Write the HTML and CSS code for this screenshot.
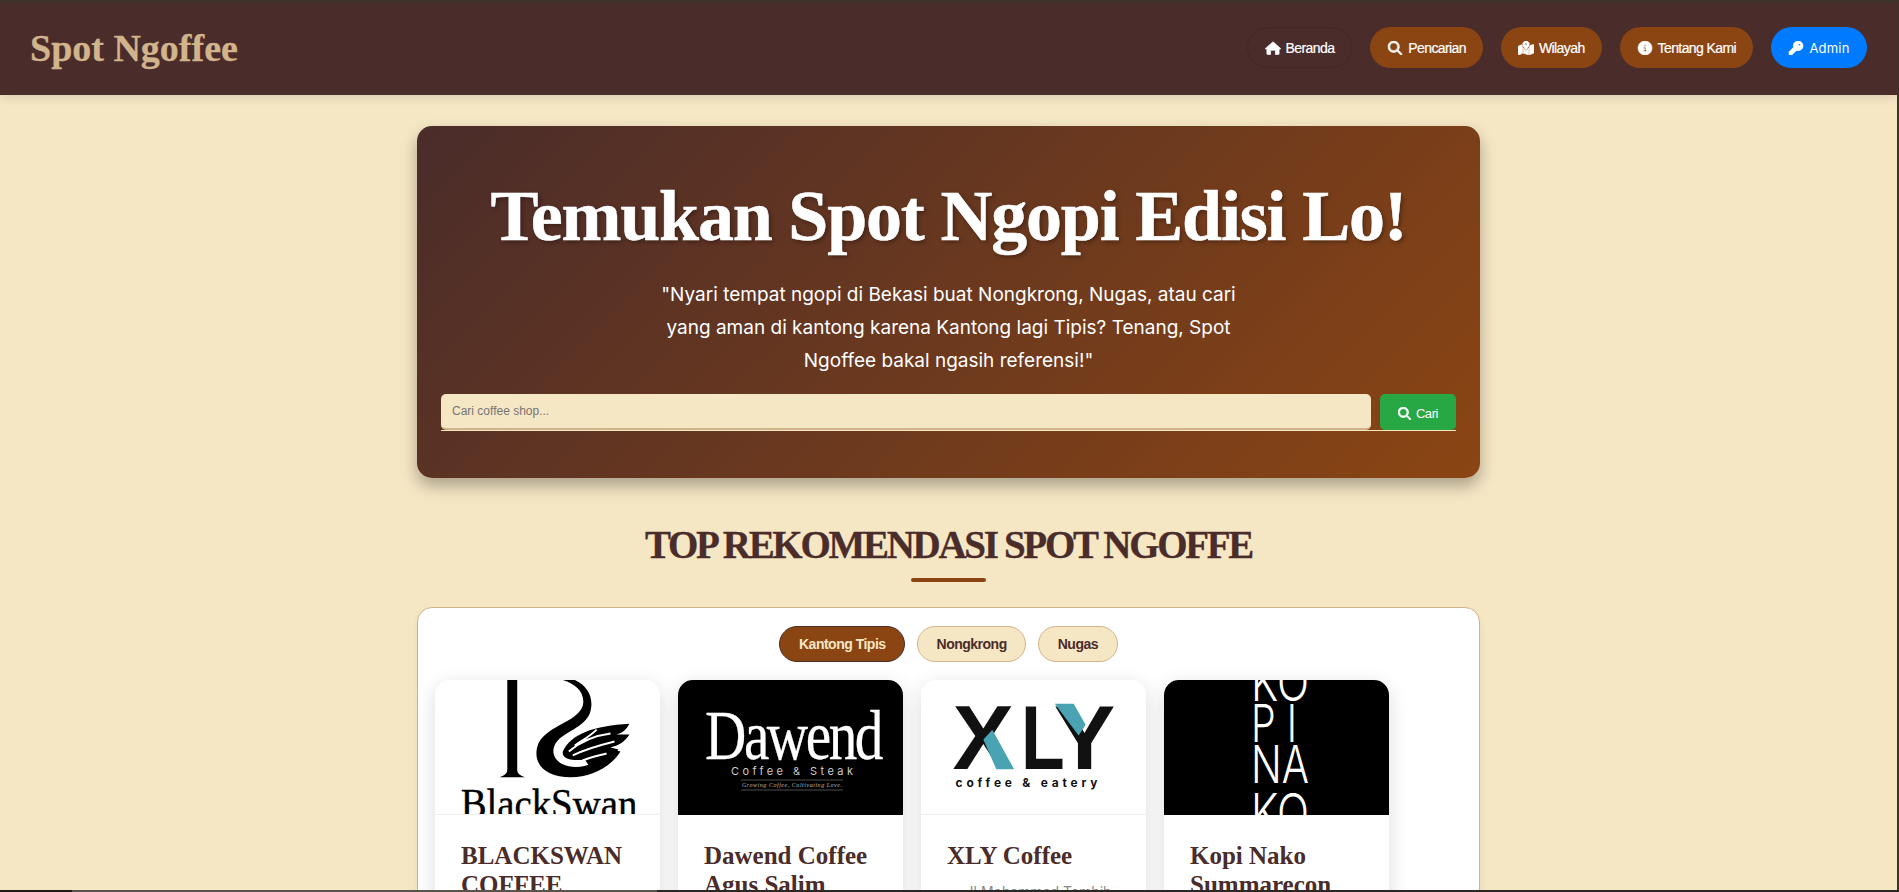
FILE: index.html
```html
<!DOCTYPE html>
<html lang="id">
<head>
<meta charset="utf-8">
<title>Spot Ngoffee</title>
<link rel="stylesheet" href="styles.css">
</head>
<body>
<div class="app">
  <nav class="navbar">
    <a class="brand">Spot Ngoffee</a>
    <ul class="nav-links">
      <li class="nav-item nav-home">
        <svg class="icon" viewBox="0 0 576 512"><path d="M288 28 L566 272 C576 282 570 296 556 296 H512 V470 C512 486 500 496 486 496 H376 V340 H200 V496 H90 C76 496 64 486 64 470 V296 H20 C6 296 0 282 10 272 Z"/></svg>
        Beranda</li>
      <li class="nav-item">
        <svg class="icon" viewBox="0 0 512 512"><path d="M416 208c0 45.900-14.900 88.300-40 122.700L502.600 457.400c12.500 12.500 12.500 32.800 0 45.300s-32.800 12.500-45.300 0L330.700 376c-34.400 25.200-76.800 40-122.700 40C93.100 416 0 322.900 0 208S93.100 0 208 0S416 93.100 416 208zM208 352a144 144 0 1 0 0-288 144 144 0 1 0 0 288z"/></svg>
        Pencarian</li>
      <li class="nav-item">
        <svg class="icon" viewBox="0 0 576 512"><path d="M408 120c0 54.600-73.100 151.900-105.200 192c-7.700 9.600-22 9.600-29.600 0C241.100 271.900 168 174.600 168 120C168 53.700 221.700 0 288 0s120 53.700 120 120zm8 80.400c3.500-6.900 6.700-13.800 9.600-20.600c.5-1.200 1-2.500 1.500-3.700l116-46.400C558.900 123.400 576 135 576 152V422.800c0 9.800-6 18.600-15.100 22.300L416 503V200.400zM137.600 138.300c2.400 14.100 7.200 28.300 12.800 41.500c2.900 6.800 6.100 13.700 9.600 20.600V451.800L32.900 502.700C17.100 509 0 497.400 0 480.400V209.600c0-9.800 6-18.600 15.100-22.300l122.600-49zM327.800 332c13.900-17.400 35.700-45.700 56.200-77V504.300L192 449.400V255c20.500 31.300 42.300 59.600 56.200 77c20.500 25.600 59.100 25.600 79.600 0zM288 152a40 40 0 1 0 0-80 40 40 0 1 0 0 80z"/></svg>
        Wilayah</li>
      <li class="nav-item">
        <svg class="icon" viewBox="0 0 512 512"><path fill-rule="evenodd" d="M256 0a256 256 0 1 0 0 512 256 256 0 1 0 0-512zM216 336h24V272H216c-13.300 0-24-10.700-24-24s10.700-24 24-24h48c13.300 0 24 10.700 24 24v88h8c13.300 0 24 10.700 24 24s-10.700 24-24 24H216c-13.300 0-24-10.700-24-24s10.700-24 24-24zm40-208a32 32 0 1 1 0 64 32 32 0 1 1 0-64z"/></svg>
        Tentang Kami</li>
      <li class="nav-item nav-admin">
        <svg class="icon" viewBox="0 0 512 512"><path d="M336 352c97.200 0 176-78.800 176-176S433.200 0 336 0S160 78.800 160 176c0 18.700 2.900 36.800 8.300 53.700L7 391c-4.500 4.500-7 10.600-7 17v80c0 13.300 10.700 24 24 24h80c13.300 0 24-10.700 24-24V448h40c13.300 0 24-10.700 24-24V384h40c6.400 0 12.500-2.500 17-7l33.300-33.300c16.900 5.400 35 8.300 53.700 8.300zM376 96a40 40 0 1 1 0 80 40 40 0 1 1 0-80z"/></svg>
        Admin</li>
    </ul>
  </nav>

  <main class="container">
    <section class="hero">
      <h1 class="hero-title">Temukan Spot Ngopi Edisi Lo!</h1>
      <p class="hero-text">"Nyari tempat ngopi di Bekasi buat Nongkrong, Nugas, atau cari yang aman di kantong karena Kantong lagi Tipis? Tenang, Spot Ngoffee bakal ngasih referensi!"</p>
      <form class="search-form">
        <input class="search-input" type="text" placeholder="Cari coffee shop...">
        <button class="search-btn" type="button">
          <svg class="icon" viewBox="0 0 512 512"><path d="M416 208c0 45.900-14.900 88.300-40 122.700L502.600 457.400c12.500 12.500 12.500 32.800 0 45.300s-32.800 12.500-45.300 0L330.700 376c-34.400 25.200-76.800 40-122.700 40C93.100 416 0 322.900 0 208S93.100 0 208 0S416 93.100 416 208zM208 352a144 144 0 1 0 0-288 144 144 0 1 0 0 288z"/></svg>
          Cari</button>
      </form>
    </section>

    <h2 class="section-title">TOP REKOMENDASI SPOT NGOFFE</h2>
    <div class="section-rule"></div>

    <section class="panel">
      <div class="filters">
        <button class="pill pill-active" type="button">Kantong Tipis</button>
        <button class="pill" type="button">Nongkrong</button>
        <button class="pill" type="button">Nugas</button>
      </div>
      <div class="cards">
        <article class="card">
          <svg class="logo logo-light" viewBox="0 0 225 135">
            <path d="M72 0H82V90C82 94 84 96 90 98H64C70 96 72 94 72 90Z"/>
            <path d="M128 0H140C154 6 160 20 155 34C149 48 130 52 122 62C114 72 120 84 134 87C150 90 165 82 178 70L186 72C176 88 156 98 136 98C112 98 98 86 102 68C108 46 142 44 148 26C151 14 142 4 128 0Z"/>
            <path d="M128 72C136 54 160 46 195 44C192 50 188 53 182 55L195 55C190 63 184 66 176 68L184 70C176 82 164 86 154 86L150 80C140 82 126 80 128 72Z"/>
            <path class="swan-cut" d="M134 72C146 62 160 56 176 54M138 76C150 70 164 66 180 62M146 82C154 78 164 76 172 74M140 66C148 60 154 58 162 50"/>
            <text class="bs-word" x="25" y="139" textLength="178" lengthAdjust="spacingAndGlyphs">BlackSwan</text>
          </svg>
          <div class="card-body"><h3 class="card-title">BLACKSWAN COFFEE</h3></div>
        </article>
        <article class="card">
          <svg class="logo logo-dark" viewBox="0 0 225 135">
            <text class="dw-word" x="27" y="79" textLength="176" lengthAdjust="spacingAndGlyphs">Dawend</text>
            <text class="dw-sub" x="53" y="95" textLength="122">Coffee &amp; Steak</text>
            <path class="dw-line" d="M63 100H165M63 110H165"/>
            <text class="dw-tag" x="64" y="107" textLength="100">Growing Coffee, Cultivating Love.</text>
          </svg>
          <div class="card-body"><h3 class="card-title">Dawend Coffee Agus Salim</h3></div>
        </article>
        <article class="card">
          <svg class="logo logo-light" viewBox="0 0 225 135">
            <text class="xly-word" x="31" y="90" textLength="62" lengthAdjust="spacingAndGlyphs">X</text>
            <text class="xly-word" x="100" y="90" textLength="44" lengthAdjust="spacingAndGlyphs">L</text>
            <text class="xly-word" x="133" y="90" textLength="62" lengthAdjust="spacingAndGlyphs">Y</text>
            <polygon class="xly-teal" points="62,60 71,50 93,90 75,90"/>
            <polygon class="xly-teal" points="134,24 153,24 165,45 158,56"/>
            <text class="xly-sub" x="34" y="108" textLength="143">coffee &amp; eatery</text>
          </svg>
          <div class="card-body">
            <h3 class="card-title">XLY Coffee</h3>
            <p class="card-address">Jl Mohammad Tambih</p>
          </div>
        </article>
        <article class="card">
          <svg class="logo logo-dark" viewBox="0 0 225 135">
            <text class="kn-word" x="87" y="21" textLength="58" lengthAdjust="spacingAndGlyphs">KO</text>
            <text class="kn-word" x="87" y="62" textLength="46" lengthAdjust="spacingAndGlyphs">P I</text>
            <text class="kn-word" x="87" y="103" textLength="58" lengthAdjust="spacingAndGlyphs">NA</text>
            <text class="kn-word" x="87" y="151" textLength="58" lengthAdjust="spacingAndGlyphs">KO</text>
          </svg>
          <div class="card-body"><h3 class="card-title">Kopi Nako Summarecon</h3></div>
        </article>
      </div>
    </section>
  </main>
</div>
<div class="taskbar"></div>
</body>
</html>
```

FILE: styles.css
```css
* { box-sizing: border-box; }
html, body { height: 892px; overflow: hidden; }
body {
  margin: 0;
  padding: 3px 2px 0 0;
  background: #3e322d;
  font-family: "Liberation Sans", Arial, sans-serif;
  color: #4a2c2a;
}
.app { height: 889px; overflow: hidden; background: #f5e6c4; }

.navbar {
  height: 92px;
  padding: 0 30px 3px;
  background: #4a2c2a;
  display: flex;
  align-items: center;
  justify-content: space-between;
  box-shadow: 0 2px 10px rgba(0,0,0,.12);
  position: relative;
}
.brand {
  font-family: "Liberation Serif", serif;
  font-weight: 700;
  font-size: 38px;
  color: #d2b48c;
  -webkit-text-stroke: .3px #d2b48c;
}
.nav-links { display: flex; gap: 18px; list-style: none; margin: 0; padding: 0; }
.nav-item {
  height: 41px;
  padding: 0 17px;
  border-radius: 21px;
  background: #8b4513;
  color: #fff;
  font-size: 14px;
  letter-spacing: -.6px;
  display: flex;
  align-items: center;
  gap: 5px;
  -webkit-text-stroke: .2px #fff;
}
.nav-home { background: #4a2c2a; border: 1px solid #442826; }
.nav-admin {
  width: 96px;
  justify-content: center;
  background: #007bff;
  font-family: Inter, sans-serif;
  font-size: 13px;
  letter-spacing: .2px;
  -webkit-text-stroke: 0;
}
.icon { width: 16px; height: 14px; fill: currentColor; stroke: currentColor; stroke-width: 24; flex: none; }

.container { width: 1063px; margin: 31px auto 0; }

.hero {
  height: 352px;
  padding: 50px 24px 0;
  border-radius: 15px;
  background: linear-gradient(135deg, #4a2c2a, #8b4513);
  box-shadow: 0 8px 16px rgba(0,0,0,.3);
  text-align: center;
  color: #fff;
}
.hero-title {
  margin: 0;
  font-family: "Liberation Serif", serif;
  font-weight: 700;
  font-size: 72px;
  line-height: 80px;
  letter-spacing: -1.2px;
  -webkit-text-stroke: .5px #fff;
  text-shadow: 2px 2px 4px rgba(0,0,0,.35);
}
.hero-text {
  width: 600px;
  margin: 22px auto 0;
  font-family: Inter, sans-serif;
  font-size: 19px;
  line-height: 33px;
}
.search-form {
  display: flex;
  gap: 9px;
  margin-top: 17px;
  border-bottom: 1px solid #f5e6c4;
}
.search-input {
  flex: 1;
  height: 36px;
  padding: 0 11px;
  border: 0;
  border-bottom: 2px solid #d2b48c;
  border-radius: 5px;
  background: #f5e6c4;
  font: 12px "Liberation Sans", sans-serif;
  outline: 0;
}
.search-input::placeholder { color: #757575; }
.search-btn {
  width: 76px;
  height: 36px;
  padding: 2px 0 0;
  border: 0;
  border-radius: 5px;
  background: #28a745;
  color: #fff;
  font: 13px "Liberation Sans", sans-serif;
  letter-spacing: -.4px;
  display: flex;
  align-items: center;
  justify-content: center;
  gap: 5px;
}
.search-btn .icon { width: 13px; height: 13px; }

.section-title {
  margin: 42px 0 0;
  text-align: center;
  font-family: "Liberation Serif", serif;
  font-weight: 700;
  font-size: 39px;
  line-height: 50px;
  letter-spacing: -2.3px;
  -webkit-text-stroke: .3px #4a2c2a;
  color: #4a2c2a;
}
.section-rule {
  width: 75px;
  height: 4px;
  margin: 8px auto 0;
  border-radius: 2px;
  background: #8b4513;
}

.panel {
  height: 400px;
  margin-top: 25px;
  padding: 18px 17px 0;
  border: 1px solid #d2b48c;
  border-radius: 15px;
  background: #fff;
  box-shadow: 0 4px 8px rgba(0,0,0,.06);
}
.filters { display: flex; justify-content: center; gap: 12px; }
.pill {
  height: 36px;
  padding: 0 18.5px;
  border: 1px solid #d2b48c;
  border-radius: 18px;
  background: #f5e6c4;
  color: #4a2c2a;
  font: 700 14px "Liberation Sans", sans-serif;
  letter-spacing: -.5px;
}
.pill-active { background: #8b4513; color: #f5e6c4; border-color: #4a2c2a; }

.cards { display: flex; gap: 18px; margin-top: 18px; }
.card {
  width: 225px;
  flex: none;
  height: 300px;
  border-radius: 15px;
  background: #fff;
  box-shadow: 0 5px 20px rgba(0,0,0,.14);
  overflow: hidden;
}
.logo { display: block; width: 225px; height: 135px; }
.logo-light { background: #fff; border-bottom: 1px solid #eee; }
.logo-dark { background: #000; }
.card-body { padding: 26px 26px 0; }
.card-title {
  margin: 0;
  font-family: "Liberation Serif", serif;
  font-weight: 700;
  font-size: 25px;
  line-height: 29px;
  color: #4a2c2a;
}
.card-address {
  margin: 13px 0 0;
  padding-left: 10px;
  text-align: center;
  font-family: Inter, sans-serif;
  font-size: 14px;
  white-space: nowrap;
  color: #888;
}

.swan-cut { fill: none; stroke: #fff; stroke-width: 2; }
.bs-word { font: 400 42px "Liberation Serif", serif; fill: #000; stroke: #000; stroke-width: .4; }
.dw-word { font: 400 70px "Liberation Serif", serif; letter-spacing: -3px; fill: #fff; stroke: #fff; stroke-width: .3; }
.dw-sub { font: 400 11px Inter, sans-serif; fill: #ccc; }
.dw-tag { font: italic 400 6px "Liberation Serif", serif; fill: #bbb; }
.dw-line { stroke: #999; stroke-width: .5; fill: none; }
.xly-word { font: 700 92px "Liberation Sans", sans-serif; fill: #111; }
.xly-teal { fill: #4aa3b2; }
.xly-sub { font: 700 12px Inter, sans-serif; fill: #111; }
.kn-word { font: 300 52px Inter, sans-serif; fill: #fff; }

.taskbar {
  position: fixed;
  left: 0;
  right: 0;
  bottom: 0;
  height: 2px;
  background: linear-gradient(90deg, #1e1a12 72px, #58544a 72px, #58544a 657px, #2a2824 657px);
}
```
